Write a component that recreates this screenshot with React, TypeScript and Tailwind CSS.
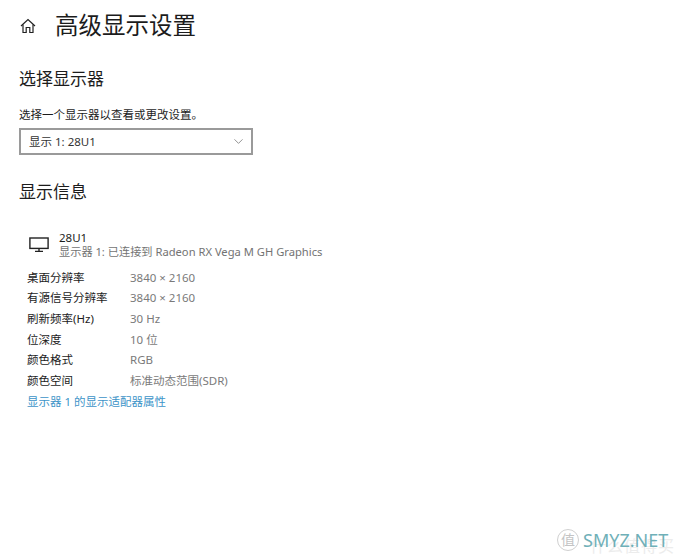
import { ChevronDown } from 'lucide-react';

const rows = [
  { label: '桌面分辨率', value: '3840 × 2160' },
  { label: '有源信号分辨率', value: '3840 × 2160' },
  { label: '刷新频率(Hz)', value: '30 Hz' },
  { label: '位深度', value: '10 位' },
  { label: '颜色格式', value: 'RGB' },
  { label: '颜色空间', value: '标准动态范围(SDR)' },
];

function HomeIcon() {
  return (
    <svg width="16" height="16" viewBox="0 0 16 16" fill="none" stroke="#222" strokeWidth="1.2">
      <path d="M1 8 L8 1.5 L15 8" />
      <path d="M3 6.5 V14.5 H6.2 V9.5 H9.8 V14.5 H13 V6.5" />
    </svg>
  );
}

function MonitorIcon() {
  return (
    <svg width="20" height="16" viewBox="0 0 20 16" fill="none" stroke="#222" strokeWidth="1.4">
      <rect x="0.9" y="1" width="18.2" height="10.4" />
      <path d="M10 11.5 V14 M6 14.4 H14" />
    </svg>
  );
}

export default function App() {
  return (
    <div className="relative h-[557px] w-[680px] overflow-hidden bg-white font-['Noto_Sans','Noto_Sans_CJK_SC',sans-serif] text-[#1c1c1c]">
      {/* Header */}
      <div className="flex h-[52px] items-center pl-[20px]">
        <HomeIcon />
        <h1 className="ml-[19px] text-[23.5px] font-normal leading-none">高级显示设置</h1>
      </div>

      {/* Select display */}
      <div className="mt-[15px] pl-[19px]">
        <h2 className="text-[17px] font-normal leading-[24px]">选择显示器</h2>
        <p className="mt-[16px] text-[11.5px] leading-[16px]">选择一个显示器以查看或更改设置。</p>
        <div className="mt-[5px] flex h-[27px] w-[234px] items-center justify-between border-2 border-[#9a9a9a] pl-[8px] pr-[5px] text-[11.5px] text-[#333]">
          <span>显示 1: 28U1</span>
          <ChevronDown size={15} strokeWidth={1} className="text-[#555]" />
        </div>
      </div>

      {/* Display info */}
      <div className="mt-[25px] pl-[19px]">
        <h2 className="text-[17px] font-normal leading-[24px]">显示信息</h2>
        <div className="mt-[27px] flex items-center pl-[10px]">
          <MonitorIcon />
          <div className="ml-[10px]">
            <div className="text-[11.5px] leading-[14px]">28U1</div>
            <div className="text-[11.2px] leading-[14px] text-[#737373]">显示器 1: 已连接到 Radeon RX Vega M GH Graphics</div>
          </div>
        </div>
        <div className="mt-[8px] pl-[8px] text-[11.5px]">
          {rows.map((row) => (
            <div key={row.label} className="flex h-[20.7px] items-center">
              <span className="w-[103px]">{row.label}</span>
              <span className="text-[#7a7a7a]">{row.value}</span>
            </div>
          ))}
          <div className="flex h-[20.7px] items-center text-[#3d94c8]">显示器 1 的显示适配器属性</div>
        </div>
      </div>

      {/* Watermark */}
      <div className="absolute left-[590px] top-[538px] text-[16px] leading-none tracking-[1px] text-[#ececec]">什么值得买</div>
      <div className="absolute left-[557px] top-[529px] flex items-center">
        <div className="flex h-[22px] w-[22px] items-center justify-center rounded-full border border-[#d0d0d0] text-[14px] leading-none text-[#c4c4c4]">值</div>
        <span className="ml-[4px] text-[18px] leading-none text-[#6fb0b8]">SMYZ.NET</span>
      </div>
    </div>
  );
}
